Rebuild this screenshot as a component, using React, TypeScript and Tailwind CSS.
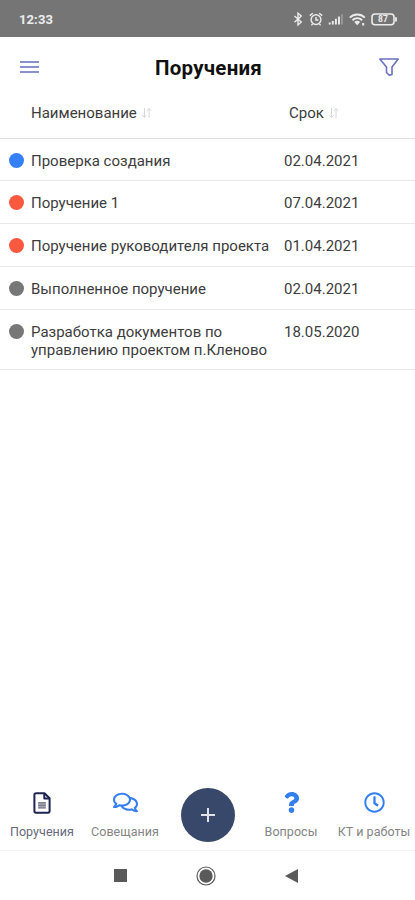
import clsx from "clsx"
import type { ReactNode } from "react"
import { FaQuestion, FaRegClock, FaRegComments } from "react-icons/fa"

type Task = {
  title: string
  date: string
  dot: string
  height: string
}

const tasks: Task[] = [
  { title: "Проверка создания", date: "02.04.2021", dot: "bg-[#3480fa]", height: "h-[42px]" },
  { title: "Поручение 1", date: "07.04.2021", dot: "bg-[#fc5a40]", height: "h-[43px]" },
  { title: "Поручение руководителя проекта", date: "01.04.2021", dot: "bg-[#fc5a40]", height: "h-[43px]" },
  { title: "Выполненное поручение", date: "02.04.2021", dot: "bg-[#777777]", height: "h-[43px]" },
  {
    title: "Разработка документов по управлению проектом п.Кленово",
    date: "18.05.2020",
    dot: "bg-[#777777]",
    height: "h-[60px]",
  },
]

function StatusBar() {
  return (
    <div className="flex h-[37px] items-center justify-between bg-[#757575] pr-[17px] pl-[19px] text-[#ececec]">
      <span className="pt-[3px] text-[13px] font-bold tracking-[0.1px]">12:33</span>
      <svg width="107" height="16" viewBox="0 0 107 16" fill="none" stroke="currentColor" strokeWidth="1.4">
        <path d="M3.5 5 10.300 11 7 14V2.200L10.300 5 3.500 11.200" />
        <circle cx="25" cy="8.600" r="4.900" />
        <path d="M25 6v3h2.400M18.800 4.600l3-2.400M31.200 4.600l-3-2.400M21.600 13l-1.200 1.200M28.400 13l1.200 1.200" />
        <path d="M38.700 13.500v-2M41.800 13.500v-3.600M44.900 13.500V7.800M48 13.500V5.600" strokeWidth="1.900" />
        <path d="M51 13.500V3.200" strokeWidth="1.900" opacity=".3" />
        <path d="M58.800 6.700c4.200-4.200 10.800-4.200 15 0M61.500 9.300c2.800-2.700 6.800-2.700 9.600 0" strokeWidth="1.900" />
        <path d="M63.300 11.100a4 4 0 0 1 5.800 0L66.200 14.200z" fill="currentColor" stroke="none" />
        <path d="M72.200 12v2.500" strokeWidth="2" />
        <rect x="81" y="3" width="22" height="10.800" rx="3" strokeWidth="1.600" />
        <path d="M105 6.200v4.400" strokeWidth="1.800" />
        <text x="92" y="11.400" textAnchor="middle" fontSize="8.500" fontWeight="700" fill="currentColor" stroke="none">
          87
        </text>
      </svg>
    </div>
  )
}

function SortIcon() {
  return (
    <svg width="11" height="12" viewBox="0 0 11 12" fill="none" stroke="#d8d8d8" strokeWidth="1">
      <path d="M3.500 1v9.500M1 8l2.500 2.500L5.500 8M8 11V1.500M5.800 4 8 1.500 10.300 4" />
    </svg>
  )
}

function FileIcon() {
  return (
    <svg width="18" height="22" viewBox="0 0 18 22" fill="none" stroke="#1e2550" strokeWidth="2" strokeLinejoin="round">
      <path d="M11.500 1.300H3A1.600 1.600 0 0 0 1.400 2.900v16.200A1.600 1.600 0 0 0 3 20.700h12a1.600 1.600 0 0 0 1.600-1.600V6.300z" />
      <path d="M11.300 1.500v5h5" />
      <path d="M5.200 10h7.600v6.500H5.200z" fill="#a3a4ae" stroke="none" />
      <path d="M5.200 10.700h7.600M5.200 13.300h7.600M5.200 15.900h7.600" stroke="#74768a" strokeWidth="1" />
    </svg>
  )
}

function Header() {
  return (
    <header className="flex h-[59px] items-center justify-between pr-[15px] pl-5">
      <button aria-label="Меню" className="flex w-[19px] flex-col gap-[3px]">
        <span className="h-[2px] bg-[#8990d0]" />
        <span className="h-[2px] bg-[#8990d0]" />
        <span className="h-[2px] bg-[#8990d0]" />
      </button>
      <h1 className="pt-[3px] text-[20.500px] leading-6 font-bold tracking-[0.25px] text-[#111111]">Поручения</h1>
      <button aria-label="Фильтр">
        <svg width="22" height="20" viewBox="0 0 22 20" fill="none" stroke="#6a70c0" strokeWidth="1.600" strokeLinejoin="round">
          <path d="M1.800 2h18.400l-6.200 8v7.500L11.500 18.300 8.500 15.500V10z" />
        </svg>
      </button>
    </header>
  )
}

function TaskRow({ title, date, dot, height }: Task) {
  return (
    <li className={clsx("flex items-start border-b border-[#e8e8e8] pt-[13px] pl-[9px] text-[15px] leading-[18px]", height)}>
      <span className={clsx("mt-px h-[15px] w-[15px] shrink-0 rounded-full", dot)} />
      <span className="ml-[7px] w-[253px] shrink-0 pr-2">{title}</span>
      <span>{date}</span>
    </li>
  )
}

function Tab({ icon, label, labelColor = "text-[#858585]" }: { icon: ReactNode; label: string; labelColor?: string }) {
  return (
    <button className="flex w-[83px] shrink-0 flex-col items-center pt-[11px] text-[#347ff0]">
      <span className="flex h-[21px] items-center pl-px">{icon}</span>
      <span className={clsx("mt-[11px] pl-px text-[12.500px] leading-4 tracking-[0.05px] whitespace-nowrap", labelColor)}>
        {label}
      </span>
    </button>
  )
}

export default function App() {
  return (
    <div className="flex h-[900px] w-[415px] flex-col overflow-hidden bg-white font-[Roboto,sans-serif] text-[#3d3d3d]">
      <StatusBar />
      <Header />

      <main className="flex-1">
        <div className="flex h-[43px] items-start border-b border-[#e2e2e2] pt-[8px] pl-[31px] text-[15px] leading-[18px]">
          <div className="flex w-[258px] items-center gap-[4px]">
            <span>Наименование</span>
            <SortIcon />
          </div>
          <div className="flex items-center gap-[4px]">
            <span>Срок</span>
            <SortIcon />
          </div>
        </div>
        <ul>
          {tasks.map((task) => (
            <TaskRow key={task.title} {...task} />
          ))}
        </ul>
      </main>

      <nav className="flex h-[70px] border-b border-[#f3f3f3]">
        <Tab icon={<FileIcon />} label="Поручения" labelColor="text-[#666a7c]" />
        <Tab icon={<FaRegComments size={25} />} label="Совещания" />
        <div className="flex w-[83px] shrink-0 justify-center pt-[7px]">
          <button aria-label="Добавить" className="flex h-[54px] w-[54px] items-center justify-center rounded-full bg-[#37486a]">
            <svg width="14" height="14" viewBox="0 0 14 14" stroke="#dfe3ea" strokeWidth="2">
              <path d="M7 0v14M0 7h14" />
            </svg>
          </button>
        </div>
        <Tab icon={<FaQuestion size={21} />} label="Вопросы" />
        <Tab icon={<FaRegClock size={21} />} label="КТ и работы" />
      </nav>

      <div className="flex h-[49px] items-center justify-center gap-[69px] pr-[3px] text-[#5a5a5a]">
        <span className="h-[13px] w-[13px] bg-current" />
        <svg width="20" height="20" viewBox="0 0 20 20">
          <circle cx="10" cy="10" r="9" fill="none" stroke="currentColor" strokeWidth="1.200" />
          <circle cx="10" cy="10" r="6.700" fill="currentColor" />
        </svg>
        <svg width="13" height="14" viewBox="0 0 13 14" fill="currentColor">
          <path d="M0 7 13 0v14z" />
        </svg>
      </div>
    </div>
  )
}
